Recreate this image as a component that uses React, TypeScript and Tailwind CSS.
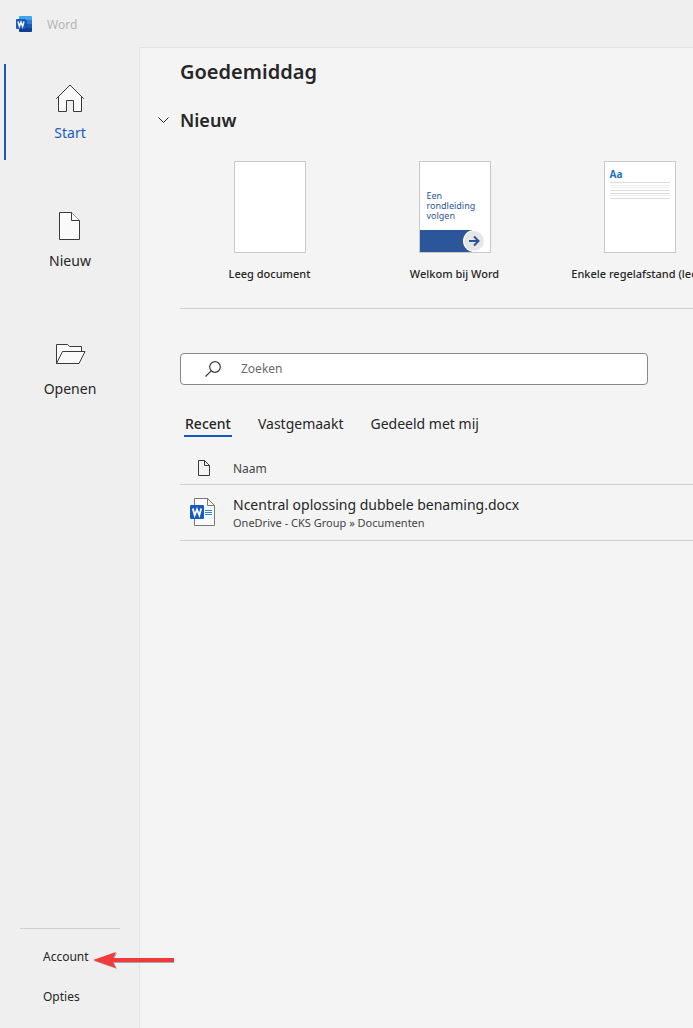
import React, { useState } from 'react';

const WordLogo: React.FC = () => (
  <svg className="h-4 w-4" viewBox="0 0 16 16" aria-hidden="true">
    <path d="M4 0h11a1 1 0 0 1 1 1v3H3V1a1 1 0 0 1 1-1z" fill="#41a5ee" />
    <path d="M3 4h13v4H3z" fill="#2b7cd3" />
    <path d="M3 8h13v4H3z" fill="#185abd" />
    <path d="M3 12h13v3a1 1 0 0 1-1 1H4a1 1 0 0 1-1-1z" fill="#103f91" />
    <path d="M3 4h7a1 1 0 0 1 1 1v8a1 1 0 0 1-1 1H3z" fill="#0d3b86" opacity="0.5" />
    <rect y="3" width="10" height="10" rx="1" fill="#185abd" />
    <path d="M2 5.5l1.4 5L5 6l1.6 4.5 1.4-5" fill="none" stroke="#fff" strokeWidth="1.4" />
  </svg>
);

const HomeIcon: React.FC = () => (
  <svg className="h-8 w-8" viewBox="0 0 32 32" fill="none" stroke="#3b3a39" aria-hidden="true">
    <path d="M4.5 14.5v15h8v-11h7v11h8v-15L16 3.5z" fill="#fafafa" stroke="none" />
    <path d="M4.5 14.5v15h8v-11h7v11h8v-15M2.3 16.7L16 3l13.7 13.7" />
  </svg>
);

const PageIcon: React.FC = () => (
  <svg className="h-8 w-8" viewBox="0 0 32 32" fill="#fafafa" stroke="#3b3a39" aria-hidden="true">
    <path d="M5.5 2.5h12l8 8v19h-20z" />
    <path d="M17.5 2.5v8h8" />
  </svg>
);

const FolderIcon: React.FC = () => (
  <svg className="h-8 w-8" viewBox="0 0 32 32" fill="#fafafa" stroke="#3b3a39" aria-hidden="true">
    <path d="M2.5 25.5v-19h11l2 2h12v6l-4 11z" />
    <path d="M2.5 25.5l6-12H31l-6 12z" />
  </svg>
);

const SmallPageIcon: React.FC = () => (
  <svg className="h-4 w-3" viewBox="0 0 12 16" fill="none" stroke="#3b3a39" aria-hidden="true">
    <path d="M.5.5h6l5 5v10H.5z" />
    <path d="M6.5.5v5h5" />
  </svg>
);

const DocIcon: React.FC = () => (
  <svg className="h-7 w-[26px]" viewBox="0 0 26 28" fill="none" aria-hidden="true">
    <path d="M4.5.5h13l7 7v20h-20z" fill="#fafafa" stroke="#797774" />
    <path d="M17.5.5v7h7" stroke="#797774" />
    <path d="M15 12.5h7M15 14.5h7M15 16.5h7" stroke="#2b88e8" />
    <rect y="7" width="14" height="14" rx="1" fill="#185abd" />
    <path d="M2.8 10.5l1.9 6.8L7 11.5l2.3 5.8 1.9-6.8" stroke="#fff" strokeWidth="1.8" />
  </svg>
);

const SearchIcon: React.FC = () => (
  <svg className="h-4 w-4 shrink-0" viewBox="0 0 16 16" fill="none" stroke="#3b3a39" strokeWidth="1.2" aria-hidden="true">
    <circle cx="10" cy="6" r="5.3" />
    <path d="M6.2 9.8L.5 15.5" />
  </svg>
);

const navItems = [
  { name: 'Start', icon: <HomeIcon /> },
  { name: 'Nieuw', icon: <PageIcon /> },
  { name: 'Openen', icon: <FolderIcon /> },
];

const tabs = ['Recent', 'Vastgemaakt', 'Gedeeld met mij'];

const TourThumb: React.FC = () => (
  <div className="flex h-full flex-col justify-end">
    <p className="pb-[9px] pl-[7px] text-left text-[9px] leading-[10px] text-[#2b579a]">
      Een
      <br />
      rondleiding
      <br />
      volgen
    </p>
    <div className="flex h-[22px] items-center justify-end bg-linear-to-r from-[#2b579a] from-75% to-white to-75% pr-[5px]">
      <svg className="h-[22px] w-[22px]" viewBox="0 0 22 22" aria-hidden="true">
        <circle cx="11" cy="11" r="11" fill="#fff" />
        <circle cx="11" cy="11" r="10" fill="#e6e6e6" />
        <path d="M6 11h9M11 6.5l4.5 4.5-4.5 4.5" fill="none" stroke="#2b579a" strokeWidth="2" />
      </svg>
    </div>
  </div>
);

const SpacingThumb: React.FC = () => (
  <div className="px-[5px] pt-[6px] text-left">
    <p className="text-[10px] font-bold leading-3 text-[#1e73be]">Aa</p>
    <svg className="mt-[2px] h-[18px] w-full" viewBox="0 0 60 18" preserveAspectRatio="none" stroke="#dcdcdc" aria-hidden="true">
      <path d="M0 .5h60M0 8.5h60M0 11.5h60M0 16.5h60" />
      <path d="M0 3.5h60M0 5.5h60M0 13.5h60" stroke="#ededed" />
    </svg>
  </div>
);

const templates = [
  { name: 'Leeg document', thumb: null },
  { name: 'Welkom bij Word', thumb: <TourThumb /> },
  { name: 'Enkele regelafstand (leeg)', thumb: <SpacingThumb /> },
];

const App: React.FC = () => {
  const [page, setPage] = useState('Start');
  const [tab, setTab] = useState('Recent');
  const [open, setOpen] = useState(true);

  return (
    <div className="flex min-h-screen flex-col overflow-hidden bg-[#efefef] font-['Segoe_UI','Noto_Sans',sans-serif] text-[#262626]">
      {/* Title bar */}
      <header className="flex h-[47px] items-center gap-[15px] pl-4">
        <WordLogo />
        <span className="pt-[2px] text-xs text-[#b5b5b5]">Word</span>
      </header>

      <div className="flex grow">
        {/* Sidebar */}
        <aside className="flex w-[139px] shrink-0 flex-col justify-between pt-[17px]">
          <nav className="flex flex-col gap-8 pl-1">
            {navItems.map((item) => (
              <button
                key={item.name}
                onClick={() => setPage(item.name)}
                className={`flex h-24 flex-col items-center gap-[9px] border-l-2 pr-[5px] pt-[18px] text-sm ${
                  page === item.name ? 'border-[#185abd] text-[#185abd]' : 'border-transparent'
                }`}
              >
                {item.icon}
                {item.name}
              </button>
            ))}
          </nav>

          <div className="ml-5 mr-[19px] flex flex-col border-t border-[#cfcfcf] pb-[11px] pt-2 text-xs">
            <a href="#account" className="relative flex h-10 items-center pl-[23px]">
              Account
              {/* Arrow pointing at the account link */}
              <svg className="absolute left-[73px] top-[14px] h-5 w-[84px]" viewBox="0 0 84 20" aria-hidden="true">
                <path d="M1 10L24 2l-3 6h60v4H21l3 6z" fill="#777" opacity="0.6" />
                <path d="M0 9L23 1l-3 6h61v4H20l3 6z" fill="#f23a3a" />
              </svg>
            </a>
            <a href="#opties" className="flex h-10 items-center pl-[23px]">
              Opties
            </a>
          </div>
        </aside>

        {/* Main panel */}
        <main className="min-w-0 grow border-l border-t border-[#e4e4e4] bg-[#f4f4f4] pl-10">
          <h1 className="pt-[10px] text-xl font-semibold leading-7">Goedemiddag</h1>
          <h2 className="-ml-6 mt-5 text-lg font-semibold leading-7">
            <button className="flex items-center gap-[9px]" aria-expanded={open} onClick={() => setOpen(!open)}>
              <svg className="h-[15px] w-[15px]" viewBox="0 0 15 15" fill="none" stroke="#262626" aria-hidden="true">
                <path d="M2.5 4.5l5 5 5-5" />
              </svg>
              Nieuw
            </button>
          </h2>

          {open && (
            <div className="-ml-[3px] mt-[27px] flex">
              {templates.map((t) => (
                <button key={t.name} className="flex w-[185px] shrink-0 flex-col items-center gap-3">
                  <div className="h-[92px] w-[72px] border border-[#c8c8c8] bg-white">{t.thumb}</div>
                  <span className="whitespace-nowrap text-[11px] font-medium leading-[18px]">{t.name}</span>
                </button>
              ))}
            </div>
          )}

          <hr className="mt-[25px] border-[#cfcfcf]" />

          <label className="mr-[45px] mt-11 flex h-8 items-center gap-5 rounded-sm border border-[#8a8886] bg-white pl-6">
            <SearchIcon />
            <input
              type="text"
              aria-label="Zoeken"
              placeholder="Zoeken"
              className="w-full text-xs outline-none placeholder:text-[#6b6b6b]"
            />
          </label>

          <div role="tablist" className="mt-7 flex gap-[25px] pl-1 text-sm">
            {tabs.map((name) => (
              <button
                key={name}
                role="tab"
                aria-selected={tab === name}
                onClick={() => setTab(name)}
                className={`border-b-2 px-px leading-[22px] ${
                  tab === name ? 'border-[#185abd] font-medium' : 'border-transparent'
                }`}
              >
                {name}
              </button>
            ))}
          </div>

          <table className="mt-[14px] w-full text-left">
            <thead>
              <tr className="h-[33px] border-b border-[#cfcfcf]">
                <th className="w-[53px] pl-[18px] pt-[2px]" aria-label="Type">
                  <SmallPageIcon />
                </th>
                <th className="pt-1 text-xs font-normal text-[#444]">Naam</th>
              </tr>
            </thead>
            <tbody>
              <tr className="h-14 border-b border-[#cfcfcf]">
                <td className="pl-[10px]">
                  <DocIcon />
                </td>
                <td className="pt-[2px]">
                  <a href="#document" className="block text-sm leading-5">
                    Ncentral oplossing dubbele benaming.docx
                  </a>
                  <span className="block text-[11px] leading-4 text-[#444]">OneDrive - CKS Group » Documenten</span>
                </td>
              </tr>
            </tbody>
          </table>
        </main>
      </div>
    </div>
  );
};

export default App;
